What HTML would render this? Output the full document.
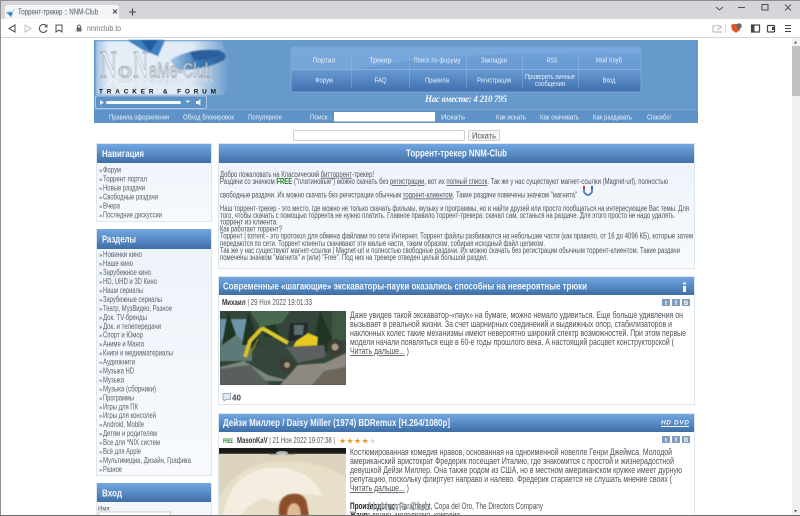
<!DOCTYPE html>
<html><head><meta charset="utf-8"><title>Торрент-трекер :: NNM-Club</title>
<style>
html,body{margin:0;padding:0;width:800px;height:516px;overflow:hidden;background:#fff}
svg{display:block;position:absolute;left:0;top:0}
text{font-family:"Liberation Sans",sans-serif}
.m{font-size:7.8px;fill:#4e5359}
.n{font-size:8.8px;fill:#4e5359}
.s{font-size:8.2px;fill:#5a6067}
.s text:nth-child(odd){font-size:6px}
.w{font-size:7.6px;fill:#e6f0fa}
.h{font-size:10.5px;font-weight:bold;fill:#f2f7fc}
.soft{filter:blur(.3px)}
.b{filter:blur(.9px)}
.b2{filter:blur(.5px)}
</style></head><body>
<svg width="800" height="516" viewBox="0 0 800 516" xmlns="http://www.w3.org/2000/svg">
<defs>
<linearGradient id="hd" x1="0" y1="0" x2="0" y2="1"><stop offset="0" stop-color="#72a7e2"/><stop offset="1" stop-color="#3f6ea6"/></linearGradient>
<linearGradient id="nb" x1="0" y1="0" x2="0" y2="1"><stop offset="0" stop-color="#6fa3da"/><stop offset=".5" stop-color="#689ad2"/><stop offset="1" stop-color="#3f70ae"/></linearGradient>
<linearGradient id="pn" x1="0" y1="0" x2="0" y2="1"><stop offset="0" stop-color="#ecf3fa"/><stop offset="1" stop-color="#f8fafd"/></linearGradient>
<linearGradient id="lg" x1="0" y1="0" x2="1" y2="0"><stop offset="0" stop-color="#a5c4e2"/><stop offset=".1" stop-color="#e6eff7"/><stop offset=".72" stop-color="#dfeaf5"/><stop offset="1" stop-color="#6699cc"/></linearGradient>
<linearGradient id="wing" x1="0" y1="0" x2="1" y2="0"><stop offset="0" stop-color="#a9c8e6"/><stop offset=".5" stop-color="#3b78b8"/><stop offset="1" stop-color="#2a5f9c"/></linearGradient>
</defs>

<!-- browser chrome -->
<rect x="0" y="0" width="800" height="20" fill="#d4d6da"/>
<rect x="0" y="0" width="800" height="1" fill="#8f8f8f"/>
<path d="M3 20Q5 20 5 17V8Q5 5 8 5H116Q119 5 119 8V17Q119 20 122 20Z" fill="#f4f5f6"/>
<rect x="0" y="19" width="800" height="18" fill="#fff"/>
<rect x="0" y="37" width="800" height="1" fill="#d4d6da"/>
<rect x="0" y="0" width="1" height="516" fill="#8f8f8f"/>
<path d="M7 9L11 14L15 8L13 12L10 12Z M6 12L11 17L13 13Z" fill="#3d85c6"/>
<text x="18" y="14.5" font-size="8.400" fill="#50555a" textLength="80" lengthAdjust="spacingAndGlyphs">Торрент-трекер :: NNM-Club</text>
<path d="M113 9.5L117 13.500M117 9.500L113 13.500" stroke="#444" stroke-width="1" fill="none"/>
<path d="M132.500 8.500V15.500M129 12H136" stroke="#444" stroke-width="1.100" fill="none"/>
<path d="M15 25L9 28.500L15 32Z" fill="none" stroke="#555" stroke-width="1.100"/>
<path d="M25 25L31 28.500L25 32Z" fill="none" stroke="#c8c8c8" stroke-width="1.100"/>
<path d="M46.500 26A4 4 0 1 0 47 30M47 24.500V27H44.500" fill="none" stroke="#555" stroke-width="1.100"/>
<path d="M56 25H62V32L59 30L56 32Z" fill="none" stroke="#555" stroke-width="1.100"/>
<rect x="76.500" y="27.500" width="5" height="4" fill="#666"/><path d="M77.500 27.500V26Q79 24 80.500 26V27.500" stroke="#666" fill="none"/>
<text x="87" y="31" font-size="8" fill="#70757a" textLength="34" lengthAdjust="spacingAndGlyphs">nnmclub.to</text>
<path d="M716 7L719.500 10L723 7" fill="none" stroke="#555"/>
<path d="M738 7.500H745" stroke="#555" stroke-width="1.100"/>
<rect x="762" y="4.500" width="6" height="5.500" fill="none" stroke="#555" stroke-width="1.100"/>
<path d="M785 4.500L791 10.500M791 4.500L785 10.500" stroke="#555" stroke-width="1.100"/>
<path d="M713 32H722M713 32V26H716M717 25L721.500 27L717 30" fill="none" stroke="#b0b0b0"/>
<rect x="725" y="24" width="1" height="9" fill="#ddd"/>
<path d="M731 25L733 24H739L741 25L740 30L736 33L732 30Z" fill="#e2572b"/><circle cx="739" cy="26" r="2.700" fill="#666"/>
<rect x="751.500" y="25" width="8" height="7" fill="none" stroke="#444" stroke-width="1.200"/><rect x="751.500" y="25" width="3" height="7" fill="#444"/>
<rect x="767.500" y="25.500" width="7" height="6.500" rx="1" fill="none" stroke="#444" stroke-width="1.200"/><rect x="772" y="27" width="3" height="3" fill="#444"/>
<path d="M785 25.500H791M785 28.500H791M785 31.500H791" stroke="#444" stroke-width="1.100"/>

<!-- scrollbar -->
<rect x="792" y="38" width="8" height="478" fill="#f1f1f1"/>
<rect x="792" y="46" width="8" height="50" fill="#c1c1c1"/>
<path d="M794 43.500L795.500 41L797 43.500Z" fill="#555"/>
<path d="M794 510L795.500 512.500L797 510Z" fill="#555"/>

<!-- site header -->
<rect x="94" y="40" width="604" height="83" fill="#6699cc"/>
<rect x="94" y="109" width="604" height="14" fill="#5f92c6"/>
<rect x="94" y="109" width="604" height="1" fill="#7aa7d4"/>
<g class="b">
<path d="M96 41H222Q236 70 224 95H96Z" fill="url(#lg)"/>
<path d="M127 40L165 40L158 56L143 50Z" fill="#3f7fc0"/>
<path d="M141 40L150 52L158 40Z" fill="#1f5d9e"/>
<path d="M170 60Q190 48 218 50Q229 54 224 60Q205 70 178 70Z" fill="url(#wing)"/>
<path d="M190 52Q208 48 222 53Q212 60 194 60Z" fill="#2a5f99"/>
</g>
<g class="b2">
<g fill="#ffffff" stroke="#3e4a5c" stroke-width=".4">
<text x="100" y="77" font-size="38" style="font-family:'Liberation Serif',serif" textLength="17" lengthAdjust="spacingAndGlyphs">N</text>
<text x="118" y="77" font-size="19" textLength="14" lengthAdjust="spacingAndGlyphs">o</text>
<text x="133" y="77" font-size="38" style="font-family:'Liberation Serif',serif" textLength="15" lengthAdjust="spacingAndGlyphs">N</text>
<text x="149" y="77" font-size="20" textLength="64" lengthAdjust="spacingAndGlyphs">aMe-Club</text>
</g>
<g fill="#ffffff" stroke="#7a8898" stroke-width=".3" opacity=".75" transform="translate(0,154.500) scale(1,-1)">
<g transform="translate(0,77) scale(1,.45) translate(0,-77)">
<text x="100" y="77" font-size="38" style="font-family:'Liberation Serif',serif" textLength="17" lengthAdjust="spacingAndGlyphs">N</text>
<text x="118" y="77" font-size="19" textLength="14" lengthAdjust="spacingAndGlyphs">o</text>
<text x="133" y="77" font-size="38" style="font-family:'Liberation Serif',serif" textLength="15" lengthAdjust="spacingAndGlyphs">N</text>
<text x="149" y="77" font-size="20" textLength="64" lengthAdjust="spacingAndGlyphs">aMe-Club</text>
</g></g>
</g>
<text x="99" y="93.500" font-size="6.400" font-weight="bold" fill="#111" textLength="117" lengthAdjust="spacing" class="soft">TRACKER &amp; FORUM</text>
<rect x="95.500" y="96" width="111" height="12.500" rx="1.500" fill="#5e93c8" stroke="#a9c6e3"/>
<path d="M100 100L104 102.500L100 105Z" fill="#e8f1f9"/>
<rect x="106" y="101" width="75" height="3" rx="1.500" fill="#f4f8fc"/>
<path d="M185.500 100.500H190L187.800 103Z" fill="#e8f1f9"/>
<path d="M196 101H198L200.500 99V105.500L198 104H196Z" fill="#e8f1f9"/>

<!-- nav box -->
<rect x="291" y="47" width="350" height="45" rx="2" fill="url(#nb)" stroke="#84aedb" stroke-width=".8"/>
<path d="M292 48H640V53Q450 50 360 69H292Z" fill="#8db8e4" opacity=".35"/>
<rect x="292" y="69" width="348" height="1" fill="#9cc0e4" opacity=".6"/>
<g fill="#9cc0e4" opacity=".4"><rect x="351" y="54" width="1" height="34"/><rect x="409" y="54" width="1" height="34"/><rect x="466" y="54" width="1" height="34"/><rect x="522" y="54" width="1" height="34"/><rect x="578" y="54" width="1" height="34"/></g>
<g class="soft w" text-anchor="middle">
<text x="324" y="62.500" textLength="23" lengthAdjust="spacingAndGlyphs">Портал</text>
<text x="380.500" y="62.500" textLength="22" lengthAdjust="spacingAndGlyphs">Трекер</text>
<text x="437" y="62.500" textLength="47" lengthAdjust="spacingAndGlyphs">Поиск по форуму</text>
<text x="494" y="62.500" textLength="26" lengthAdjust="spacingAndGlyphs">Закладки</text>
<text x="552" y="62.500" textLength="11" lengthAdjust="spacingAndGlyphs">RSS</text>
<text x="609" y="62.500" textLength="26" lengthAdjust="spacingAndGlyphs">Мой Клуб</text>
<text x="324" y="82.500" textLength="18" lengthAdjust="spacingAndGlyphs">Форум</text>
<text x="380.500" y="82.500" textLength="12" lengthAdjust="spacingAndGlyphs">FAQ</text>
<text x="437" y="82.500" textLength="24" lengthAdjust="spacingAndGlyphs">Правила</text>
<text x="494" y="82.500" textLength="34" lengthAdjust="spacingAndGlyphs">Регистрация</text>
<text x="550" y="79" textLength="50" lengthAdjust="spacingAndGlyphs">Проверить личные</text>
<text x="550" y="86" textLength="30" lengthAdjust="spacingAndGlyphs">сообщения</text>
<text x="609" y="82.500" textLength="13" lengthAdjust="spacingAndGlyphs">Вход</text>
</g>
<text x="425" y="102" font-size="9" font-weight="bold" font-style="italic" fill="#f4f8fc" class="soft" style="font-family:'Liberation Serif',serif" textLength="82" lengthAdjust="spacing">Нас вместе: 4 210 795</text>
<g class="soft">
<text class="w" x="109" y="119.500" textLength="60" lengthAdjust="spacingAndGlyphs">Правила оформления</text>
<text class="w" x="183" y="119.500" textLength="51" lengthAdjust="spacingAndGlyphs">Обход блокировок</text>
<text class="w" x="248" y="119.500" textLength="34" lengthAdjust="spacingAndGlyphs">Популярное</text>
<text class="w" x="310" y="119.500" textLength="21" lengthAdjust="spacingAndGlyphs">Поиск :</text>
<text class="w" x="441" y="119.500" textLength="24" lengthAdjust="spacingAndGlyphs">Искать</text>
<text class="w" x="496" y="119.500" textLength="30" lengthAdjust="spacingAndGlyphs">Как искать</text>
<text class="w" x="540" y="119.500" textLength="39" lengthAdjust="spacingAndGlyphs">Как скачивать</text>
<text class="w" x="593" y="119.500" textLength="39" lengthAdjust="spacingAndGlyphs">Как раздавать</text>
<text class="w" x="647" y="119.500" textLength="24" lengthAdjust="spacingAndGlyphs">Спасибо!</text>
</g>
<rect x="334" y="112" width="101" height="9.500" fill="#fff"/>

<!-- search -->
<rect x="293.500" y="130.500" width="171" height="10" rx="1" fill="#fff" stroke="#cfcfcf"/>
<rect x="468.500" y="130.500" width="31" height="10" rx="1" fill="#f4f4f4" stroke="#d0d0d0"/>
<text x="484" y="138.500" font-size="8" fill="#555" text-anchor="middle" textLength="24" lengthAdjust="spacingAndGlyphs">Искать</text>

<!-- navigation panel -->
<rect x="96.500" y="143.500" width="115" height="78" fill="url(#pn)" stroke="#dde5ee"/>
<rect x="97" y="144" width="114" height="19" fill="url(#hd)"/>
<text class="h soft" x="102" y="157" textLength="42" lengthAdjust="spacingAndGlyphs">Навигация</text>
<g class="s soft">
<text x="99" y="172.500">»</text><text x="103" y="172.500" textLength="18" lengthAdjust="spacingAndGlyphs">Форум</text>
<text x="99" y="181.500">»</text><text x="103" y="181.500" textLength="44" lengthAdjust="spacingAndGlyphs">Торрент портал</text>
<text x="99" y="190.500">»</text><text x="103" y="190.500" textLength="42" lengthAdjust="spacingAndGlyphs">Новые раздачи</text>
<text x="99" y="199.500">»</text><text x="103" y="199.500" textLength="55" lengthAdjust="spacingAndGlyphs">Свободные раздачи</text>
<text x="99" y="208.500">»</text><text x="103" y="208.500" textLength="17" lengthAdjust="spacingAndGlyphs">Вчера</text>
<text x="99" y="217.500">»</text><text x="103" y="217.500" textLength="59" lengthAdjust="spacingAndGlyphs">Последние дискуссии</text>
</g>

<!-- sections panel -->
<rect x="96.500" y="229.500" width="115" height="246" fill="url(#pn)" stroke="#dde5ee"/>
<rect x="97" y="229" width="114" height="20" fill="url(#hd)"/>
<text class="h soft" x="102" y="242.500" textLength="34" lengthAdjust="spacingAndGlyphs">Разделы</text>
<g class="s soft">
<text x="99" y="257.200">»</text><text x="103" y="257.200" textLength="39" lengthAdjust="spacingAndGlyphs">Новинки кино</text>
<text x="99" y="266.100">»</text><text x="103" y="266.100" textLength="30" lengthAdjust="spacingAndGlyphs">Наше кино</text>
<text x="99" y="275.100">»</text><text x="103" y="275.100" textLength="48" lengthAdjust="spacingAndGlyphs">Зарубежное кино</text>
<text x="99" y="284">»</text><text x="103" y="284" textLength="54" lengthAdjust="spacingAndGlyphs">HD, UHD и 3D Кино</text>
<text x="99" y="293">»</text><text x="103" y="293" textLength="40" lengthAdjust="spacingAndGlyphs">Наши сериалы</text>
<text x="99" y="301.900">»</text><text x="103" y="301.900" textLength="59" lengthAdjust="spacingAndGlyphs">Зарубежные сериалы</text>
<text x="99" y="310.900">»</text><text x="103" y="310.900" textLength="69" lengthAdjust="spacingAndGlyphs">Театр, МузВидео, Разное</text>
<text x="99" y="319.800">»</text><text x="103" y="319.800" textLength="44" lengthAdjust="spacingAndGlyphs">Док. TV-бренды</text>
<text x="99" y="328.800">»</text><text x="103" y="328.800" textLength="58" lengthAdjust="spacingAndGlyphs">Док. и телепередачи</text>
<text x="99" y="337.700">»</text><text x="103" y="337.700" textLength="40" lengthAdjust="spacingAndGlyphs">Спорт и Юмор</text>
<text x="99" y="346.700">»</text><text x="103" y="346.700" textLength="41" lengthAdjust="spacingAndGlyphs">Аниме и Манга</text>
<text x="99" y="355.600">»</text><text x="103" y="355.600" textLength="70" lengthAdjust="spacingAndGlyphs">Книги и медиаматериалы</text>
<text x="99" y="364.500">»</text><text x="103" y="364.500" textLength="32" lengthAdjust="spacingAndGlyphs">Аудиокниги</text>
<text x="99" y="373.500">»</text><text x="103" y="373.500" textLength="31" lengthAdjust="spacingAndGlyphs">Музыка HD</text>
<text x="99" y="382.400">»</text><text x="103" y="382.400" textLength="21" lengthAdjust="spacingAndGlyphs">Музыка</text>
<text x="99" y="391.400">»</text><text x="103" y="391.400" textLength="53" lengthAdjust="spacingAndGlyphs">Музыка (сборники)</text>
<text x="99" y="400.300">»</text><text x="103" y="400.300" textLength="31" lengthAdjust="spacingAndGlyphs">Программы</text>
<text x="99" y="409.300">»</text><text x="103" y="409.300" textLength="35" lengthAdjust="spacingAndGlyphs">Игры для ПК</text>
<text x="99" y="418.200">»</text><text x="103" y="418.200" textLength="53" lengthAdjust="spacingAndGlyphs">Игры для консолей</text>
<text x="99" y="427.200">»</text><text x="103" y="427.200" textLength="41" lengthAdjust="spacingAndGlyphs">Android, Mobile</text>
<text x="99" y="436.100">»</text><text x="103" y="436.100" textLength="54" lengthAdjust="spacingAndGlyphs">Детям и родителям</text>
<text x="99" y="445.100">»</text><text x="103" y="445.100" textLength="57" lengthAdjust="spacingAndGlyphs">Все для *NIX систем</text>
<text x="99" y="454">»</text><text x="103" y="454" textLength="38" lengthAdjust="spacingAndGlyphs">Всё для Apple</text>
<text x="99" y="463">»</text><text x="103" y="463" textLength="88" lengthAdjust="spacingAndGlyphs">Мультимедиа, Дизайн, Графика</text>
<text x="99" y="471.900">»</text><text x="103" y="471.900" textLength="19" lengthAdjust="spacingAndGlyphs">Разное</text>
</g>

<!-- login panel -->
<rect x="96.500" y="483.500" width="115" height="40" fill="#f3f6fa" stroke="#dde5ee"/>
<rect x="97" y="483" width="114" height="19" fill="url(#hd)"/>
<text class="h soft" x="102" y="496.500" textLength="20" lengthAdjust="spacingAndGlyphs">Вход</text>
<text x="98" y="510.500" font-size="6.500" fill="#555" textLength="13" lengthAdjust="spacingAndGlyphs">Имя:</text>
<rect x="98.500" y="512" width="72" height="10" fill="#fff" stroke="#cfcfcf"/>

<!-- main intro panel -->
<rect x="218.500" y="143.500" width="476" height="125" fill="url(#pn)" stroke="#dde5ee"/>
<rect x="219" y="144" width="475" height="19" fill="url(#hd)"/>
<text class="h soft" x="406" y="156.500" textLength="101" lengthAdjust="spacingAndGlyphs">Торрент-трекер NNM-Club</text>
<g class="m soft">
<text x="220" y="176.800" textLength="154" lengthAdjust="spacingAndGlyphs">Добро пожаловать на Классический <tspan text-decoration="underline">битторрент</tspan>-трекер!</text>
<text x="220" y="184.200" textLength="448" lengthAdjust="spacingAndGlyphs">Раздачи со значком <tspan font-weight="bold" fill="#1c7a1c">FREE</tspan> ("платиновые") можно скачать без <tspan text-decoration="underline">регистрации</tspan>, вот их <tspan text-decoration="underline">полный список</tspan>. Так же у нас существуют магнет-ссылки (Magnet-url), полностью</text>
<text x="220" y="197.500" textLength="357" lengthAdjust="spacingAndGlyphs">свободные раздачи. Их можно скачать без регистрации обычным <tspan text-decoration="underline">торрент-клиентом</tspan>. Такие раздачи помечены значком "магнита"</text>
<text x="220" y="210.800" textLength="469" lengthAdjust="spacingAndGlyphs">Наш торрент-трекер - это место, где можно не только скачать фильмы, музыку и программы, но и найти друзей или просто пообщаться на интересующие Вас темы. Для</text>
<text x="220" y="217.800" textLength="454" lengthAdjust="spacingAndGlyphs">того, чтобы скачать с помощью торрента не нужно платить. Главное правило торрент-трекера: скачал сам, останься на раздаче. Для этого просто не надо удалять</text>
<text x="220" y="224.500" textLength="58" lengthAdjust="spacingAndGlyphs">торрент из клиента.</text>
<text x="220" y="231.500" textLength="62" lengthAdjust="spacingAndGlyphs">Как работает торрент?</text>
<text x="220" y="238.500" textLength="473" lengthAdjust="spacingAndGlyphs">Торрент | torrent - это протокол для обмена файлами по сети Интернет. Торрент файлы разбиваются на небольшие части (как правило, от 16 до 4096 КБ), которые затем</text>
<text x="220" y="245.800" textLength="325" lengthAdjust="spacingAndGlyphs">передаются по сети. Торрент клиенты скачивают эти малые части, таким образом, собирая исходный файл целиком.</text>
<text x="220" y="252.800" textLength="460" lengthAdjust="spacingAndGlyphs">Так же у нас существуют магнет-ссылки | Magnet-url и полностью свободные раздачи. Их можно скачать без регистрации обычным торрент-клиентом. Такие раздачи</text>
<text x="220" y="259.800" textLength="268" lengthAdjust="spacingAndGlyphs">помечены значком "магнита" и (или) "Free". Под них на трекере отведен целый большой раздел.</text>
</g>
<path d="M584 187V192Q588 198 592 192V187" fill="none" stroke="#4a7bc0" stroke-width="1.800"/>
<rect x="583" y="186" width="2" height="3" fill="#c8323c"/><rect x="591" y="186" width="2" height="3" fill="#3a64b8"/>

<!-- news 1 -->
<rect x="218.500" y="276.500" width="476" height="128" fill="#fff" stroke="#dde5ee"/>
<rect x="219" y="277" width="475" height="18" fill="url(#hd)"/>
<text class="h soft" x="223" y="289.500" textLength="364" lengthAdjust="spacingAndGlyphs">Современные «шагающие» экскаваторы-пауки оказались способны на невероятные трюки</text>
<path d="M683 282.500h3v2h-3zM683 286h3v6h-3z" fill="#eef4fa"/>
<text x="222" y="305" font-size="7.800" fill="#555" class="soft" textLength="90" lengthAdjust="spacingAndGlyphs"><tspan font-weight="bold" fill="#333">Михаил</tspan> | 29 Ноя 2022 19:01:33</text>
<g fill="#7f9dbd"><rect x="662" y="299" width="8" height="7"/><rect x="672" y="299" width="8" height="7"/><rect x="682" y="299" width="8" height="7"/></g>
<g font-size="6" font-weight="bold" fill="#fff" text-anchor="middle"><text x="666" y="305">t</text><text x="676" y="305">f</text><text x="686" y="305">В</text></g>
<svg x="220" y="311" width="126" height="74" viewBox="0 0 126 74">
<rect width="126" height="74" fill="#34463a"/>
<g class="b2">
<rect x="0" y="8" width="30" height="32" fill="#6f93a8"/>
<path d="M0 30L14 22L32 38V50H0Z" fill="#5d7a78"/>
<path d="M8 0L16 24L2 34ZM28 0L40 34H22ZM50 0L60 26L44 26ZM100 0L118 40H92Z" fill="#1f3524"/>
<path d="M30 0H70L62 12L40 16Z" fill="#4a6a50"/>
<rect x="112" y="0" width="14" height="30" fill="#3c5a40"/>
<path d="M0 56L24 50L48 64L70 70H0V74H0Z" fill="#7c8680"/>
<path d="M0 58L30 54L50 74H0Z" fill="#59605c"/>
<path d="M60 74L78 54L105 52L126 42V74Z" fill="#8e8a82"/>
<path d="M92 74L104 60L126 56V74Z" fill="#6c665c"/>
<path d="M25 46L30 30L42 17" fill="none" stroke="#d9c12a" stroke-width="4"/>
<path d="M42 17L68 32" fill="none" stroke="#dcc92f" stroke-width="4"/>
<path d="M30 44L38 28" fill="none" stroke="#8a7a1c" stroke-width="1.500"/>
<path d="M70 12H88L86 30H68Z" fill="#24292b"/>
<path d="M74 14H84L83 24H74Z" fill="#5b6f72"/>
<path d="M76 30L88 22L98 26L97 38L72 38Z" fill="#e6c820"/>
<path d="M66 36L104 34L106 46L78 52Z" fill="#5c6060"/>
<circle cx="115" cy="36" r="8" fill="#3d3c36"/><circle cx="115" cy="36" r="3.500" fill="#a59f80"/>
<circle cx="67" cy="54" r="7" fill="#3c3a36"/><circle cx="67" cy="54" r="3" fill="#a09a78"/>
</g>
</svg>
<g class="n soft">
<text x="350" y="318.200" textLength="333" lengthAdjust="spacingAndGlyphs">Даже увидев такой экскаватор-«паук» на бумаге, можно немало удивиться. Еще больше удивления он</text>
<text x="350" y="327.200" textLength="322" lengthAdjust="spacingAndGlyphs">вызывает в реальной жизни. За счет шарнирных соединений и выдвижных опор, стабилизаторов и</text>
<text x="350" y="336.200" textLength="336" lengthAdjust="spacingAndGlyphs">наклонных колес такие механизмы имеют невероятно широкий спектр возможностей. При этом первые</text>
<text x="350" y="345.200" textLength="324" lengthAdjust="spacingAndGlyphs">модели начали появляться еще в 60-е годы прошлого века. А настоящий расцвет конструкторской (</text>
<text x="350" y="354.200" textLength="59" lengthAdjust="spacingAndGlyphs"><tspan text-decoration="underline">Читать дальше...</tspan> )</text>
</g>
<path d="M223 393.500H230.500V399.500H226L224 401V399.500H223Z" fill="#dde6ee" stroke="#8ba0b4" stroke-width=".8"/>
<text x="232" y="400.500" font-size="8" font-weight="bold" fill="#444">40</text>

<!-- news 2 -->
<rect x="218.500" y="413.500" width="476" height="110" fill="#fff" stroke="#dde5ee"/>
<rect x="219" y="414" width="475" height="18" fill="url(#hd)"/>
<text class="h soft" x="223" y="425.800" textLength="227" lengthAdjust="spacingAndGlyphs">Дейзи Миллер / Daisy Miller (1974) BDRemux [H.264/1080p]</text>
<text x="661" y="424.500" font-size="6.500" font-weight="bold" font-style="italic" fill="#eef4fa" textLength="28" lengthAdjust="spacing">HD DVD</text>
<rect x="661" y="426" width="28" height="1" fill="#eef4fa"/>
<text x="223" y="442.800" font-size="6.800" font-weight="bold" fill="#1c7a1c" textLength="10" lengthAdjust="spacingAndGlyphs">FREE</text>
<text x="237" y="442.800" font-size="7.800" fill="#555" class="soft" textLength="98" lengthAdjust="spacingAndGlyphs"><tspan font-weight="bold" fill="#333">MasonKaV</tspan> | 21 Ноя 2022 19:07:38 |</text>
<g font-size="8" fill="#e69a1f"><text x="339" y="443.500">★</text><text x="346.500" y="443.500">★</text><text x="354" y="443.500">★</text><text x="361.500" y="443.500">★</text><text x="369" y="443.500" fill="#dddddd">★</text></g>
<g fill="#7f9dbd"><rect x="662" y="436" width="8" height="7"/><rect x="672" y="436" width="8" height="7"/><rect x="682" y="436" width="8" height="7"/></g>
<g font-size="6" font-weight="bold" fill="#fff" text-anchor="middle"><text x="666" y="442">t</text><text x="676" y="442">f</text><text x="686" y="442">В</text></g>
<svg x="219" y="448" width="127" height="68" viewBox="0 0 127 68">
<rect width="127" height="68" fill="#e8dfc8"/>
<rect width="127" height="6" fill="#1a1a18"/>
<ellipse cx="63" cy="6" rx="13" ry="5" fill="#1a1a18"/>
<ellipse cx="63" cy="5" rx="6" ry="2" fill="#a8b2c0"/>
<g class="b">
<path d="M0 6H127V30Q100 10 50 14Q16 20 0 50Z" fill="#ddd4bd"/>
<path d="M4 68Q10 26 48 20Q88 16 104 48L88 46L72 46L56 54L44 50L30 58L20 68Z" fill="#f3eee0"/>
<path d="M60 68Q58 48 72 46Q86 44 88 56L90 68Z" fill="#8d4f2a"/>
<path d="M68 68Q68 56 75 55Q82 56 82 68Z" fill="#e0b892"/>
</g>
</svg>
<g class="n soft">
<text x="350" y="455.200" textLength="322" lengthAdjust="spacingAndGlyphs">Костюмированная комедия нравов, основанная на одноименной новелле Генри Джеймса. Молодой</text>
<text x="350" y="464.200" textLength="324" lengthAdjust="spacingAndGlyphs">американский аристократ Фредерик посещает Италию, где знакомится с простой и жизнерадостной</text>
<text x="350" y="473.200" textLength="332" lengthAdjust="spacingAndGlyphs">девушкой Дейзи Миллер. Она также родом из США, но в местном американском кружке имеет дурную</text>
<text x="350" y="482.200" textLength="322" lengthAdjust="spacingAndGlyphs">репутацию, поскольку флиртует направо и налево. Фредерик старается не слушать мнение своих (</text>
<text x="350" y="491.200" textLength="59" lengthAdjust="spacingAndGlyphs"><tspan text-decoration="underline">Читать дальше...</tspan> )</text>
<text x="350" y="509" textLength="193" lengthAdjust="spacingAndGlyphs"><tspan font-weight="bold" fill="#222">Производство:</tspan> Paramount, Copa del Oro, The Directors Company</text>
<text x="350" y="518" textLength="110" lengthAdjust="spacingAndGlyphs"><tspan font-weight="bold" fill="#222">Жанр:</tspan> драма, мелодрама, комедия</text>
</g>
<text x="368" y="510" font-size="11" fill="#e8eef5" stroke="#66707c" stroke-width=".4" textLength="62" lengthAdjust="spacingAndGlyphs">NoName Club</text>

<rect x="0" y="515" width="800" height="1" fill="#6f6f6f"/>
</svg>
</body></html>
